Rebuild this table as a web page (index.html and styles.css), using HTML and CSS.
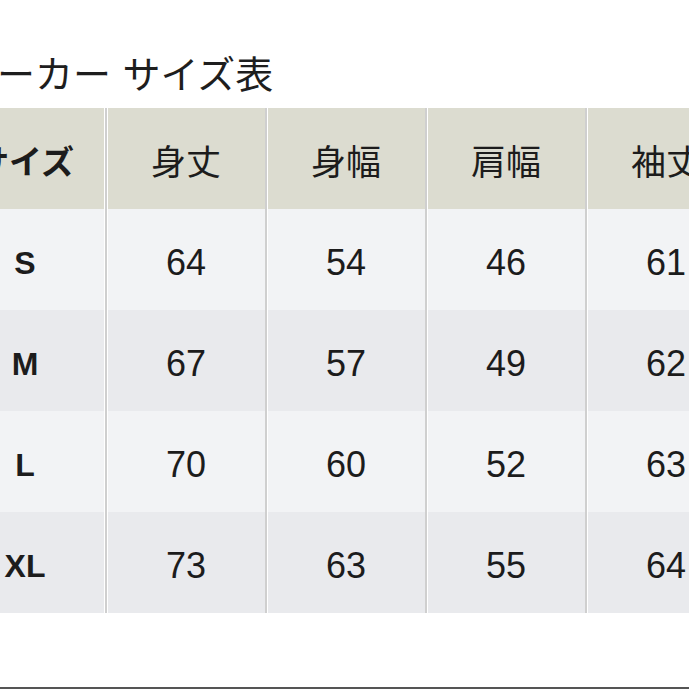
FILE: index.html
```html
<!DOCTYPE html>
<html lang="ja">
<head>
<meta charset="utf-8">
<title>パーカー サイズ表</title>
<link rel="stylesheet" href="styles.css">
</head>
<body>
<main class="page">
  <h1 class="title">パーカー サイズ表</h1>
  <div class="table">
    <div class="cell head size">サイズ</div>
    <div class="cell head">身丈</div>
    <div class="cell head">身幅</div>
    <div class="cell head">肩幅</div>
    <div class="cell head">袖丈</div>

    <div class="cell odd size">S</div>
    <div class="cell odd num">64</div>
    <div class="cell odd num">54</div>
    <div class="cell odd num">46</div>
    <div class="cell odd num">61</div>

    <div class="cell even size">M</div>
    <div class="cell even num">67</div>
    <div class="cell even num">57</div>
    <div class="cell even num">49</div>
    <div class="cell even num">62</div>

    <div class="cell odd size">L</div>
    <div class="cell odd num">70</div>
    <div class="cell odd num">60</div>
    <div class="cell odd num">52</div>
    <div class="cell odd num">63</div>

    <div class="cell even size">XL</div>
    <div class="cell even num">73</div>
    <div class="cell even num">63</div>
    <div class="cell even num">55</div>
    <div class="cell even num">64</div>
  </div>
  <div class="bottom-line"></div>
</main>
</body>
</html>
```

FILE: styles.css
```css
html, body {
  margin: 0;
  padding: 0;
  background: #ffffff;
  overflow: hidden;
}

.page {
  display: flex;
  flex-direction: column;
  height: 689px;
  width: 689px;
  overflow: hidden;
}

.title {
  flex: none;
  margin: 0 0 0 -41px;
  padding-top: 53px;
  height: 108px;
  box-sizing: border-box;
  font-family: "Noto Sans CJK JP", sans-serif;
  font-weight: 400;
  font-size: 38px;
  line-height: 38px;
  color: #1e1e1e;
  white-space: nowrap;
  word-spacing: 3px;
}

.table {
  flex: none;
  display: grid;
  grid-template-columns: repeat(5, 160px);
  grid-auto-rows: 101px;
  margin-left: -55px;
  width: 800px;
}

.cell {
  display: flex;
  align-items: center;
  justify-content: center;
  color: #1c1c1c;
  box-sizing: border-box;
}

.cell + .cell {
  border-left: 2px solid #cfcfcf;
  box-shadow: inset 1px 0 #ffffff;
}

.table .cell:nth-child(5n+1) {
  border-left: none;
  box-shadow: inset -1px 0 #ffffff;
}

.head {
  background: #dcdcd0;
  font-family: "Noto Sans CJK JP", sans-serif;
  font-size: 35px;
  font-weight: 400;
  padding-top: 2px;
}

.head.size {
  font-weight: 700;
  font-size: 33px;
}

.odd { background: #f2f3f5; }
.even { background: #e9eaed; }

.num {
  font-family: "Liberation Sans", Arial, sans-serif;
  font-size: 36px;
  padding-top: 7px;
}

.size:not(.head) {
  font-family: "Liberation Sans", Arial, sans-serif;
  font-weight: 700;
  font-size: 32px;
  padding-top: 7px;
}

.bottom-line {
  margin-top: auto;
  height: 2px;
  background: #555555;
}
```
